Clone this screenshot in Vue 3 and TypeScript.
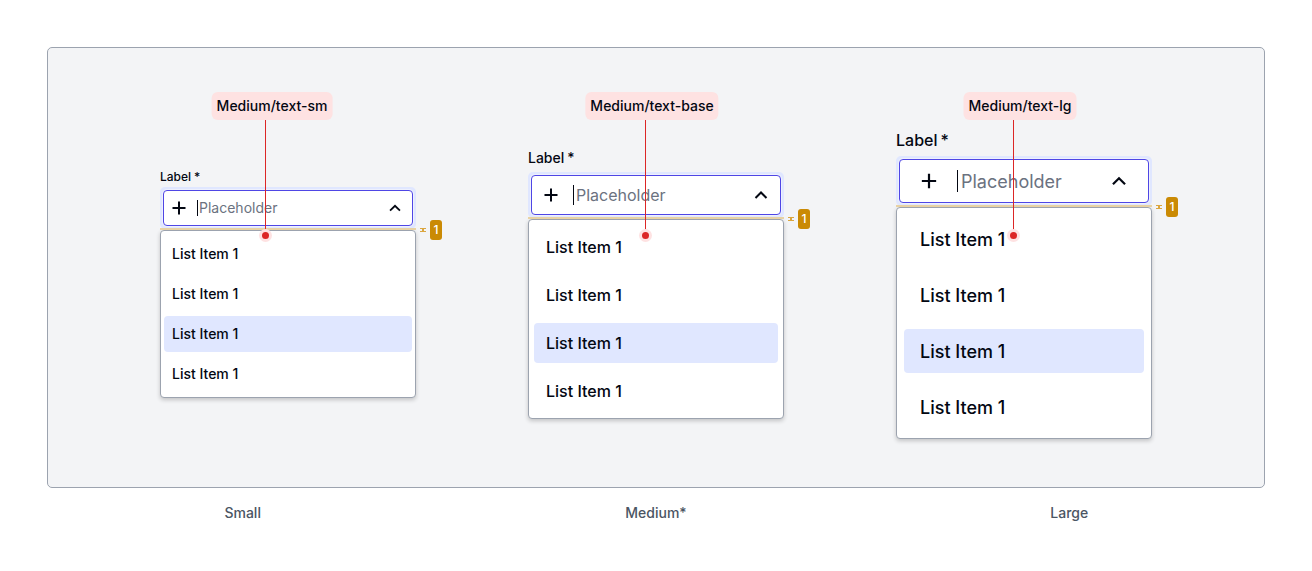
<script setup lang="ts">
interface SelectSpec {
  size: 'sm' | 'md' | 'lg'
  token: string
  caption: string
}

const specs: SelectSpec[] = [
  { size: 'sm', token: 'Medium/text-sm', caption: 'Small' },
  { size: 'md', token: 'Medium/text-base', caption: 'Medium*' },
  { size: 'lg', token: 'Medium/text-lg', caption: 'Large' },
]

const items: string[] = ['List Item 1', 'List Item 1', 'List Item 1', 'List Item 1']
const selected = 2
</script>

<template>
  <main class="page">
    <section class="panel">
      <div v-for="spec in specs" :key="spec.size" class="column" :class="spec.size">
        <label class="label" :for="`field-${spec.size}`">
          <span>Label</span>
          <span>*</span>
        </label>
        <div class="ring">
          <div class="field">
            <svg class="icon" viewBox="0 0 20 20" aria-hidden="true">
              <path d="M10 3.5V16.5M3.5 10H16.5" />
            </svg>
            <span class="caret"></span>
            <input :id="`field-${spec.size}`" class="input" type="text" placeholder="Placeholder" />
            <button class="toggle" type="button" aria-label="Close list">
              <svg class="icon chevron" viewBox="0 0 20 20" aria-hidden="true">
                <path d="M4.5 13L10 7.5L15.5 13" />
              </svg>
            </button>
          </div>
        </div>
        <div class="gap">
          <div class="measure">
            <svg class="bracket" viewBox="0 0 6 4" aria-hidden="true">
              <path d="M0 0.5H6M0 3.5H6M2 1.5H4M2 2.5H4" />
            </svg>
            <span class="badge">1</span>
          </div>
        </div>
        <ul class="list" role="listbox">
          <li
            v-for="(item, i) in items"
            :key="i"
            class="item"
            :class="{ selected: i === selected }"
            role="option"
            :aria-selected="i === selected"
          >
            {{ item }}
          </li>
        </ul>
        <span class="tag">{{ spec.token }}</span>
        <span class="pointer"></span>
      </div>
    </section>
    <div class="captions">
      <span v-for="spec in specs" :key="spec.size">{{ spec.caption }}</span>
    </div>
  </main>
</template>

<style>
body {
  margin: 0;
  background: #fff;
}
</style>

<style scoped>
* {
  box-sizing: border-box;
}

.page {
  padding: 47px 0;
  font-family: Inter, 'Liberation Sans', sans-serif;
  font-weight: 500;
  color: #030712;
}

.panel {
  display: flex;
  justify-content: center;
  gap: 112px;
  margin: 0 47px;
  padding: 80px 48px 48px;
  border: 1px solid #9ca3af;
  border-radius: 5px;
  background: #f3f4f6;
}

.column {
  position: relative;
  display: flex;
  flex-direction: column;
  justify-content: center;
  width: 256px;
}

.label {
  display: flex;
  gap: 3px;
  font-size: 14px;
  line-height: 20px;
  margin-bottom: 4px;
}

.ring {
  padding: 2px;
  border-radius: 5px;
  background: #e0e7ff;
}

.field {
  display: flex;
  align-items: center;
  height: 40px;
  border: 1px solid #4f46e5;
  border-radius: 4px;
  box-shadow: 0 0 0 1px #eef1fd;
  margin: 1px;
  padding: 0 9px;
  background: #fff;
}

.icon {
  display: block;
  flex: none;
  width: 20px;
  height: 20px;
  fill: none;
  stroke: #030712;
  stroke-width: 2;
}

.caret {
  flex: none;
  width: 1px;
  height: 20px;
  margin-left: 12px;
  background: #030712;
}

.input {
  flex: 1;
  min-width: 0;
  margin: 0 0 0 2px;
  padding: 0;
  border: 0;
  outline: 0;
  background: transparent;
  font: inherit;
  font-weight: 400;
  font-size: 16px;
  line-height: 24px;
  color: #030712;
}

.input::placeholder {
  color: #6b7280;
  opacity: 1;
}

.toggle {
  padding: 0;
  border: 0;
  background: transparent;
}

.gap {
  position: relative;
  height: 2px;
  margin-top: -1px;
  background: #e8d2a4;
}

.measure {
  position: absolute;
  left: 100%;
  top: -8px;
  display: flex;
  align-items: center;
  gap: 4px;
  margin-left: 4px;
}

.bracket {
  display: block;
  width: 6px;
  height: 4px;
  fill: none;
  stroke: #dba640;
}

.badge {
  width: 12px;
  border-radius: 3px;
  background: #ca8a04;
  color: #fff;
  font-size: 12px;
  line-height: 20px;
  text-align: center;
}

.list {
  display: flex;
  flex-direction: column;
  gap: 8px;
  margin: 0;
  padding: 7px 5px;
  list-style: none;
  border: 1px solid #9ca3af;
  border-radius: 4px;
  background: #fff;
  box-shadow: 0 2px 4px rgba(0, 0, 0, 0.2);
}

.item {
  padding: 8px 12px;
  border-radius: 4px;
  font-size: 16px;
  line-height: 24px;
}

.selected {
  background: #e0e7ff;
}

.tag {
  position: absolute;
  top: -36px;
  left: 124px;
  transform: translateX(-50%);
  padding: 4px 5px;
  border-radius: 6px;
  background: #fee2e2;
  font-size: 14px;
  line-height: 20px;
  white-space: nowrap;
}

.pointer {
  position: absolute;
  top: -8px;
  left: 117px;
  width: 1px;
  height: 115px;
  background: #dc2626;
}

.pointer::after {
  content: '';
  position: absolute;
  left: -3px;
  bottom: -4px;
  width: 7px;
  height: 7px;
  border-radius: 50%;
  background: #dc2626;
  box-shadow: 0 0 0 3px #fee2e2;
}

.sm .label {
  font-size: 12px;
  line-height: 16px;
  margin-bottom: 2px;
}

.sm .field {
  height: 36px;
  padding: 0 8px 0 5px;
}

.sm .chevron {
  width: 18px;
  height: 18px;
}

.sm .caret {
  height: 16px;
  margin-left: 8px;
}

.sm .input {
  margin-left: 1px;
  font-size: 14px;
  line-height: 20px;
}

.sm .list {
  gap: 4px;
  padding: 5px 3px;
}

.sm .item {
  padding: 8px;
  font-size: 14px;
  line-height: 20px;
}

.sm .tag {
  left: 112px;
}

.sm .pointer {
  left: 105px;
}

.lg .label {
  font-size: 16px;
  line-height: 24px;
}

.lg .field {
  height: 44px;
  padding: 0 18px;
}

.lg .icon {
  width: 22px;
  height: 22px;
}

.lg .caret {
  height: 22px;
  margin-left: 17px;
}

.lg .input {
  margin-left: 3px;
  padding-top: 2px;
  font-size: 18px;
  line-height: 28px;
}

.lg .list {
  gap: 12px;
  padding: 9px 7px;
}

.lg .item {
  padding: 9px 16px 7px;
  font-size: 18px;
  line-height: 28px;
}

.captions {
  display: grid;
  grid-template-columns: repeat(3, 1fr);
  margin-top: 15px;
  padding: 0 36px;
  font-size: 14px;
  line-height: 20px;
  text-align: center;
  color: #4b5563;
}
</style>
